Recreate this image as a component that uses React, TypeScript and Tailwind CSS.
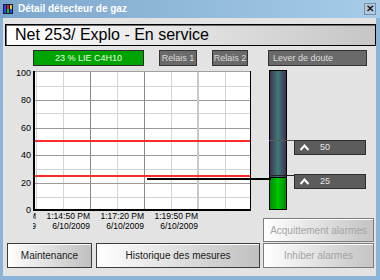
import React from 'react';

const GasIcon = () => (
  <svg width="10" height="10" viewBox="0 0 10 10">
    <rect x="0" y="0" width="10" height="10" fill="#1a1a40" />
    <rect x="1" y="1" width="2" height="8" fill="#2050e0" />
    <rect x="4" y="1" width="2" height="4" fill="#e02020" />
    <rect x="4" y="5" width="2" height="4" fill="#20c020" />
    <rect x="7" y="1" width="2" height="4" fill="#e0d020" />
    <rect x="7" y="5" width="2" height="4" fill="#2050e0" />
  </svg>
);

const Chevron = () => (
  <svg width="9" height="7" viewBox="0 0 9 7">
    <path d="M0.5 6 L4.5 1.5 L8.5 6" fill="none" stroke="#ffffff" strokeWidth="2" />
  </svg>
);

const Plot = () => {
  const lightH = [15, 42, 70, 98, 126];
  const darkH = [29, 57, 84, 112];
  const lightV = [3, 30, 84, 138, 192];
  const darkV = [57, 111];
  return (
    <svg width="218" height="140" viewBox="0 0 218 140" className="block">
      <rect x="0" y="0" width="218" height="140" fill="#ffffff" />
      {lightH.map((y) => (
        <line key={'lh' + y} x1="2" x2="217" y1={y + 0.5} y2={y + 0.5} stroke="#d4d4d4" />
      ))}
      {lightV.map((x) => (
        <line key={'lv' + x} x1={x + 0.5} x2={x + 0.5} y1="0" y2="138" stroke="#d4d4d4" />
      ))}
      {darkH.map((y) => (
        <line key={'dh' + y} x1="2" x2="217" y1={y + 0.5} y2={y + 0.5} stroke="#9a9a9a" />
      ))}
      {darkV.map((x) => (
        <line key={'dv' + x} x1={x + 0.5} x2={x + 0.5} y1="0" y2="138" stroke="#8a8a8a" />
      ))}
      <line x1="165" x2="165" y1="0" y2="138" stroke="#c8c8c8" strokeWidth="2" />
      <line x1="0" x2="218" y1="0.5" y2="0.5" stroke="#a0a0a0" />
      <rect x="2" y="69" width="215" height="2" fill="#ff2a2a" />
      <rect x="2" y="104" width="215" height="2" fill="#ff2a2a" />
      <line x1="217.5" x2="217.5" y1="0" y2="140" stroke="#000000" />
      <rect x="0" y="0" width="2" height="140" fill="#000000" />
      <rect x="0" y="138" width="218" height="2" fill="#000000" />
    </svg>
  );
};

const Threshold = ({ value }: { value: number }) => (
  <div className="w-[72px] h-[15px] bg-[#5c5c5c] border border-[#2e2e2e] flex items-center pl-[5px]">
    <Chevron />
    <span className="ml-[11px] text-[9px] leading-none text-[#e4e4e4]">{value}</span>
  </div>
);

export default function App() {
  const yLabels = ['100', '80', '60', '40', '20', '0'];
  const xLabels = ['1:12:20 PM', '1:14:50 PM', '1:17:20 PM', '1:19:50 PM'];

  return (
    <div className="w-[380px] h-[280px] bg-[#8cb4d8] flex flex-col overflow-hidden font-['Liberation_Sans',Arial,sans-serif]">
      {/* Title bar */}
      <div className="h-[18px] flex items-center pl-[3px] pr-[4px] bg-linear-to-r from-[#7ca6cc] to-[#a6cce8]">
        <GasIcon />
        <span className="ml-[5px] text-[10px] font-bold text-white leading-none">Détail détecteur de gaz</span>
        <div className="ml-auto w-[12px] h-[12px] bg-[#b6c8da] border border-[#6f8fae] flex items-center justify-center text-[10px] font-bold leading-none text-[#1a1a1a]">
          ✕
        </div>
      </div>

      {/* Body */}
      <div className="flex-1 ml-[3px] mr-[4px] mb-[4px] bg-[#e3e3e3] flex flex-col">
        {/* Header */}
        <div className="mt-[6px] ml-[2px] w-[371px] h-[22px] border border-black shadow-[inset_1px_1px_0_#6a6a6a] bg-linear-to-r from-white to-[#c6c6c6] flex items-center pl-[9px]">
          <span className="text-[16px] leading-none text-black">Net 253/ Explo - En service</span>
        </div>

        {/* Status row */}
        <div className="mt-[4px] h-[16px] flex text-[9px] leading-none">
          <div className="ml-[30px] w-[111px] bg-[#00a400] border border-[#2a2a2a] flex items-center justify-center text-[#e6ffe6]">
            23 % LIE C4H10
          </div>
          <div className="ml-[15px] w-[38px] bg-[#6a6a6a] border border-[#333] flex items-center justify-center text-[#dcdcdc]">
            Relais 1
          </div>
          <div className="ml-[15px] w-[36px] bg-[#6a6a6a] border border-[#333] flex items-center justify-center text-[#dcdcdc]">
            Relais 2
          </div>
          <div className="ml-[20px] w-[99px] bg-[#6a6a6a] border border-[#333] flex items-center pl-[4px] text-[#dcdcdc]">
            Lever de doute
          </div>
        </div>

        {/* Main area */}
        <div className="relative h-[176px] flex">
          <div className="w-[259px] flex">
            <div className="w-[28px] mt-[2px] h-[147px] flex flex-col justify-between text-right text-[9px] leading-[10px] text-black">
              {yLabels.map((l) => (
                <span key={l}>{l}</span>
              ))}
            </div>
            <div className="ml-[2px] mt-[5px] flex flex-col">
              <Plot />
              <div className="w-[218px] overflow-hidden">
                <div className="flex ml-[-51px] text-[8.5px] leading-[10px] text-black">
                  {xLabels.map((l) => (
                    <div key={l} className="w-[54px] shrink-0 text-right whitespace-nowrap">
                      <div>{l}</div>
                      <div>6/10/2009</div>
                    </div>
                  ))}
                </div>
              </div>
            </div>
          </div>

          <div className="flex flex-col w-[114px]">
            <div className="relative h-[148px]">
              <div className="ml-[7px] mt-[4px] w-[18px] h-[140px] border border-black flex flex-col">
                <div className="flex-1 bg-linear-to-r from-[#3b3352] via-[#3e7a7a] to-[#3b3352]" />
                <div className="h-[32px] border-t border-black bg-linear-to-r from-[#008c00] via-[#00c800] to-[#008c00]" />
              </div>
              <div className="absolute left-[7px] top-[74px] w-[25px] h-[1px] bg-[#5a5a5a]" />
              <div className="absolute left-[7px] top-[109px] w-[25px] h-[1px] bg-[#222]" />
              <div className="absolute left-[32px] top-[74px]">
                <Threshold value={50} />
              </div>
              <div className="absolute left-[32px] top-[108px]">
                <Threshold value={25} />
              </div>
            </div>
            <button className="mt-[4px] ml-[1px] w-[111px] h-[24px] border border-[#7c7c7c] shadow-[inset_1px_1px_0_#ffffff] bg-linear-to-r from-white to-[#c4c4c4] text-[10px] text-[#a4a4a4]">
              Acquittement alarmes
            </button>
          </div>

          {/* current value line */}
          <div className="absolute left-[144px] top-[112px] w-[124px] h-[2px] bg-black" />
        </div>

        {/* Bottom buttons */}
        <div className="mt-[1px] h-[25px] flex text-[10px]">
          <button className="ml-[4px] w-[85px] border border-[#3c3c3c] shadow-[inset_1px_1px_0_#ffffff] bg-linear-to-r from-white to-[#c0c0c0] text-[#202020]">
            Maintenance
          </button>
          <button className="ml-[4px] w-[164px] border border-[#3c3c3c] shadow-[inset_1px_1px_0_#ffffff] bg-linear-to-r from-white to-[#c0c0c0] text-[#202020]">
            Historique des mesures
          </button>
          <button className="ml-[3px] w-[111px] border border-[#7c7c7c] shadow-[inset_1px_1px_0_#ffffff] bg-linear-to-r from-white to-[#c4c4c4] text-[#a4a4a4]">
            Inhiber alarmes
          </button>
        </div>
      </div>
    </div>
  );
}
